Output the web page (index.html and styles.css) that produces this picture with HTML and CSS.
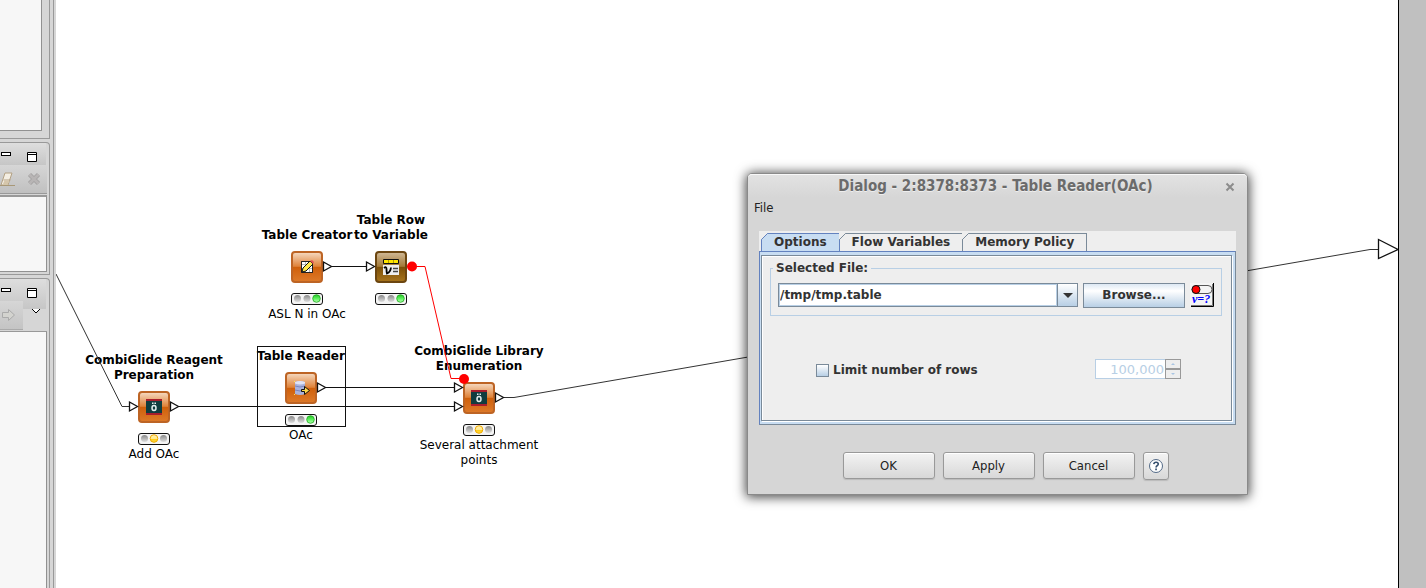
FILE: index.html
```html
<!DOCTYPE html>
<html lang="en">
<head>
<meta charset="utf-8">
<title>Workflow editor</title>
<link rel="stylesheet" href="styles.css">
</head>
<body>
<svg class="defs" width="0" height="0" aria-hidden="true">
  <defs>
    <linearGradient id="orange" x1="0" y1="0" x2="0" y2="1">
      <stop offset="0" stop-color="#f6dcc4"/><stop offset=".48" stop-color="#df8238"/>
      <stop offset=".5" stop-color="#cf5f0a"/><stop offset="1" stop-color="#dd7a2a"/>
    </linearGradient>
    <linearGradient id="brown" x1="0" y1="0" x2="0" y2="1">
      <stop offset="0" stop-color="#d2bb98"/><stop offset=".48" stop-color="#a37a38"/>
      <stop offset=".5" stop-color="#7b4f08"/><stop offset="1" stop-color="#a8741c"/>
    </linearGradient>
    <linearGradient id="grey" x1="0" y1="0" x2="0" y2="1">
      <stop offset="0" stop-color="#888"/><stop offset="1" stop-color="#ddd"/>
    </linearGradient>
    <linearGradient id="green" x1="0" y1="0" x2="0" y2="1">
      <stop offset="0" stop-color="#25c425"/><stop offset=".5" stop-color="#5df05d"/><stop offset="1" stop-color="#b5ffae"/>
    </linearGradient>
    <linearGradient id="amber" x1="0" y1="0" x2="0" y2="1">
      <stop offset="0" stop-color="#fff3b8"/><stop offset=".5" stop-color="#ffe98e"/><stop offset=".55" stop-color="#ffc813"/><stop offset="1" stop-color="#ffe14a"/>
    </linearGradient>
    <symbol id="tile-orange" viewBox="0 0 32 32">
      <rect x="1" y="1" width="30" height="30" rx="3" fill="url(#orange)" stroke="#bd6424" stroke-width="2"/>
    </symbol>
    <symbol id="tile-brown" viewBox="0 0 32 32">
      <rect x="1" y="1" width="30" height="30" rx="3" fill="url(#brown)" stroke="#6c4610" stroke-width="2"/>
    </symbol>
    <symbol id="lights-green" viewBox="0 0 32 12">
      <rect x=".5" y=".5" width="31" height="11" rx="2.5" fill="#f4f4f4" stroke="#111"/>
      <circle cx="6.500" cy="5.500" r="3.500" fill="url(#grey)"/><circle cx="16" cy="5.500" r="3.500" fill="url(#grey)"/>
      <circle cx="25.500" cy="5.500" r="3.800" fill="url(#green)" stroke="#1daa1d" stroke-width=".8"/>
    </symbol>
    <symbol id="lights-amber" viewBox="0 0 32 12">
      <rect x=".5" y=".5" width="31" height="11" rx="2.500" fill="#f4f4f4" stroke="#111"/>
      <circle cx="6.500" cy="5.500" r="3.500" fill="url(#grey)"/><circle cx="25.500" cy="5.500" r="3.500" fill="url(#grey)"/>
      <circle cx="16" cy="5.500" r="3.800" fill="url(#amber)" stroke="#f0a800" stroke-width="1"/>
    </symbol>
  </defs>
</svg>

<main class="workbench">
  <aside class="sidebar">
    <section class="view view-top"><div class="view-content"></div></section>
    <section class="view view-console">
      <div class="view-header">
        <button class="tool" aria-label="Minimize"><svg width="12" height="12"><rect x="1.500" y="1.500" width="9" height="3" fill="#fff" stroke="#000"/></svg></button>
        <button class="tool" aria-label="Maximize"><svg width="12" height="12"><path d="M1.500 1.500h9v9h-9zM1 3.500h10" fill="#fff" stroke="#000"/></svg></button>
      </div>
      <div class="view-tools">
        <button class="tool" aria-label="Clear"><svg width="16" height="16"><path d="M5 1h7l-4 12H1z" fill="#f4eee2" stroke="#b3a184"/><path d="M3.500 8h7" stroke="#b3a184"/><path d="M4.500 8.500h5l-2 4.500h-5z" fill="#d5c6ab"/><path d="M0 13.500h15" stroke="#a89877"/></svg></button>
        <button class="tool" aria-label="Remove"><svg width="14" height="14"><path d="M2.500 2.500l9 9M11.500 2.500l-9 9" stroke="#a5a3a3" stroke-width="4.500"/><path d="M2.500 2.500l9 9M11.500 2.500l-9 9" stroke="#b8b5b5" stroke-width="2.500"/></svg></button>
      </div>
      <div class="view-content"></div>
    </section>
    <section class="view view-help">
      <div class="view-header">
        <button class="tool" aria-label="Minimize"><svg width="12" height="12"><rect x="1.500" y="1.500" width="9" height="3" fill="#fff" stroke="#000"/></svg></button>
        <button class="tool" aria-label="Maximize"><svg width="12" height="12"><path d="M1.500 1.500h9v9h-9zM1 3.500h10" fill="#fff" stroke="#000"/></svg></button>
      </div>
      <div class="help-tools">
        <button class="tool nav" aria-label="Forward"><svg width="16" height="14"><path d="M2.500 4.500h6v-3l6 5.500-6 5.500v-3h-6z" fill="#d3d3cf" stroke="#aaa"/></svg></button>
        <button class="tool menu" aria-label="View menu"><svg width="10" height="6"><path d="M1 0l4 4 4-4" fill="#fff" stroke="#000"/></svg></button>
      </div>
      <div class="view-content"></div>
    </section>
  </aside>

  <section class="canvas">
    <div class="node creator">
      <div class="name">Table Creator</div>
      <svg class="tile" viewBox="0 0 32 32"><use href="#tile-orange"/>
        <path d="M10.500 10.500h11v11h-11z" fill="#fff" stroke="#333"/><path d="M10 13.500h12M10 17.500h12M14.500 10v12M18.500 10v12" stroke="#bbb"/><path d="M10.500 10.500h11v11h-11z" fill="none" stroke="#222"/>
        <path d="M11 21l1-4 7-7 3 3-7 7z" fill="#ffe94a" stroke="#111"/><path d="M19 10l2-1 2 2-1 2z" fill="#e35353"/></svg>
      <svg class="lights"><use href="#lights-green"/></svg>
      <div class="label">ASL N in OAc</div>
    </div>
    <div class="node variable">
      <div class="name">Table Row<br>to Variable</div>
      <svg class="tile" viewBox="0 0 32 32"><use href="#tile-brown"/>
        <path d="M8.500 8.500h15v4h-15z" fill="#ffe600" stroke="#111"/><path d="M13.500 9v3M18.500 9v3" stroke="#b59d00"/><path d="M8 14h16v10H8z" fill="#eee"/>
        <path d="M18 17.500h5M18 20.500h5" stroke="#444" stroke-width="1.500"/><path d="M9 17q2.500-2 2.500 1t.500 4.500q3.500-1.500 4-6" fill="none" stroke="#000" stroke-width="1.800"/></svg>
      <svg class="lights"><use href="#lights-green"/></svg>
    </div>
    <div class="node reagent">
      <div class="name">CombiGlide Reagent<br>Preparation</div>
      <svg class="tile" viewBox="0 0 32 32"><use href="#tile-orange"/><path d="M8 8h16v16H8z" fill="#a81d2b"/><path d="M8 10h16v12H8z" fill="#103c3e"/><ellipse cx="16" cy="17" rx="2" ry="2.500" fill="none" stroke="#e3eded" stroke-width="1.500"/><path d="M14 11.500h1.500v1.500H14zM16.500 11.500H18v1.500h-1.500z" fill="#e3eded"/></svg>
      <svg class="lights"><use href="#lights-amber"/></svg>
      <div class="label">Add OAc</div>
    </div>
    <div class="node reader">
      <div class="name">Table Reader</div>
      <svg class="tile" viewBox="0 0 32 32"><use href="#tile-orange"/><path d="M10 10q5-2 10 0v12q-5 2-10 0z" fill="#a9b2dc"/><path d="M10 10q5-2 10 0v1.500q-5 2-10 0z" fill="#dfe3f6"/><path d="M10 14q5 2 10 0M10 18q5 2 10 0" fill="none" stroke="#7c86bd"/><path d="M16.500 17.500h3v-3l5 4-5 4v-3h-3z" fill="#ffd84a" stroke="#111"/><path d="M9 9h1v1H9zM9 22h1v1H9z" fill="#ffe34d"/></svg>
      <svg class="lights"><use href="#lights-green"/></svg>
      <div class="label">OAc</div>
    </div>
    <div class="node library">
      <div class="name">CombiGlide Library<br>Enumeration</div>
      <svg class="tile" viewBox="0 0 32 32"><use href="#tile-orange"/><path d="M8 8h16v16H8z" fill="#a81d2b"/><path d="M8 10h16v12H8z" fill="#103c3e"/><ellipse cx="16" cy="17" rx="2" ry="2.500" fill="none" stroke="#e3eded" stroke-width="1.500"/><path d="M14 11.500h1.500v1.500H14zM16.500 11.500H18v1.500h-1.500z" fill="#e3eded"/></svg>
      <svg class="lights"><use href="#lights-amber"/></svg>
      <div class="label">Several attachment<br>points</div>
    </div>

    <svg class="edges" aria-hidden="true">
      <g transform="translate(-56 0)" fill="none" stroke="#111">
        <path d="M56 274L122 406.500h7" stroke="#333"/>
        <path d="M179 406.500h275M326 387.500h128M332 266.500h34"/>
        <path d="M504 397.500h10L1370 249.500h8" stroke="#333"/>
        <rect x="257.500" y="346.500" width="88" height="80"/>
        <g fill="#fff" stroke-width="1.300">
          <path d="M129.500 402l8 4.500-8 4.500zM170.500 402l8 4.500-8 4.500zM454.500 402l8 4.500-8 4.500zM454.500 383l8 4.500-8 4.500zM317.500 383l8 4.500-8 4.500zM495.500 393l8 4.500-8 4.500zM323.500 262l8 4.500-8 4.500zM366.500 262l8 4.500-8 4.500z"/>
          <path d="M1378.500 239.500l19.500 10-19.500 9z"/>
        </g>
        <path d="M412 266.500h13L451 378.500h10" stroke="#f00"/>
        <g fill="#f00" stroke="none"><circle cx="412" cy="266.500" r="5"/><circle cx="464" cy="379" r="5"/></g>
      </g>
    </svg>

    <div class="dialog" role="dialog" aria-labelledby="dialog-title">
      <header class="titlebar">
        <h1 id="dialog-title">Dialog - 2:8378:8373 - Table Reader(OAc)</h1>
        <button class="close" aria-label="Close"><svg width="10" height="10"><path d="M1.500 1.500l7 7M8.500 1.500l-7 7" stroke="#8c8c8c" stroke-width="2"/></svg></button>
      </header>
      <nav class="menubar"><button class="menu-item">File</button></nav>
      <div class="tabpane">
        <div class="tabs" role="tablist">
          <button class="tab active" role="tab" aria-selected="true">Options<svg class="notch" width="8" height="8"><path d="M0 0h7L0 7z" fill="#eee"/><path d="M.5 8V6.500L6.500.500H8" fill="none" stroke="#6382bf"/></svg></button>
          <button class="tab" role="tab" aria-selected="false">Flow Variables<svg class="notch" width="8" height="8"><path d="M0 0h7L0 7z" fill="#eee"/><path d="M0 7L6.500.500H8" fill="none" stroke="#7a8a99"/></svg></button>
          <button class="tab" role="tab" aria-selected="false">Memory Policy<svg class="notch" width="8" height="8"><path d="M0 0h7L0 7z" fill="#eee"/><path d="M0 7L6.500.500H8" fill="none" stroke="#7a8a99"/></svg></button>
        </div>
        <div class="tab-frame">
          <form class="tab-body">
            <fieldset class="file-group">
              <legend>Selected File:</legend>
              <div class="file-row">
                <div class="combo">
                  <input type="text" value="/tmp/tmp.table" aria-label="Selected file">
                  <button type="button" aria-label="Show recent files"><svg width="10" height="5"><path d="M0 0h10L5 5z" fill="#333"/></svg></button>
                </div>
                <button type="button" class="metal">Browse...</button>
                <button type="button" class="variable-button" aria-label="Flow variable"><svg width="24" height="24"><path d="M0 0h23v23H0z" fill="#f4f4f4"/><path d="M23.500 0v23.500H1" fill="none" stroke="#000"/><path d="M22.500 1v21.500H1" fill="none" stroke="#777"/><rect x="2" y="2.500" width="20" height="8" rx="4" fill="#f4f4f4" stroke="#555"/><circle cx="6" cy="6.500" r="4" fill="#f00" stroke="#111"/><text x="2" y="20" class="variable-mark">v=?</text></svg></button>
              </div>
            </fieldset>
            <div class="limit-row">
              <label class="limit"><input type="checkbox">Limit number of rows</label>
              <div class="spinner">
                <input type="text" value="100,000" aria-label="Row limit" disabled>
                <div class="steps">
                  <button type="button" aria-label="Increase" disabled><svg width="4" height="2"><path d="M0 2l2-2 2 2z" fill="#a9c5e3"/></svg></button>
                  <button type="button" aria-label="Decrease" disabled><svg width="4" height="2"><path d="M0 0h4L2 2z" fill="#a9c5e3"/></svg></button>
                </div>
              </div>
            </div>
          </form>
        </div>
      </div>
      <footer class="actions">
        <button class="action">OK</button>
        <button class="action">Apply</button>
        <button class="action">Cancel</button>
        <button class="help" aria-label="Help"><svg width="16" height="16"><circle cx="8" cy="8" r="6.500" fill="#fff" stroke="#536a87"/><path d="M5.800 6.200q.2-2 2.300-2t2.200 1.900q0 1-1.200 1.700-1 .6-1 1.700" fill="none" stroke="#36506f" stroke-width="1.600"/><path d="M7.200 10.500h1.700v1.700H7.200z" fill="#36506f"/></svg></button>
      </footer>
    </div>
  </section>
  <div class="gutter"></div>
</main>
</body>
</html>
```
FILE: styles.css
```css
* { box-sizing: border-box; }
body { margin: 0; font-family: "DejaVu Sans Condensed", "DejaVu Sans", sans-serif; font-size: 13px; line-height: 15px; color: #000; }
button, input { font: inherit; color: inherit; margin: 0; padding: 0; border: 0; border-radius: 0; background: none; }
svg { display: block; }
.defs { position: absolute; }
.workbench { display: flex; min-height: 100vh; overflow: hidden; background: #fff; }

.sidebar { flex: none; width: 56px; display: flex; flex-direction: column; gap: 3px; padding-right: 6px; background: linear-gradient(to right, #d6d6d6 53px, #999 53px, #999 54px, #d6d6d6 54px); }
.view { border-right: 1px solid #999; border-bottom: 1px solid #999; display: flex; flex-direction: column; }
.view-content { background: #f7f7f7; border-right: 1px solid #919191; border-bottom: 1px solid #919191; margin-right: 2px; flex: 1; }
.view-top { height: 139px; padding-bottom: 7px; }
.view-top .view-content { margin-right: 7px; }
.view-console { height: 133px; padding-bottom: 2px; border-top: 1px solid #999; border-top-right-radius: 4px; }
.view-help { flex: 1; border-top: 1px solid #999; border-bottom: 0; border-top-right-radius: 4px; }
.view-header { display: flex; align-items: flex-start; gap: 14px; height: 22px; margin-right: 3px; padding-top: 8px; background: linear-gradient(#dedede, #c6c6c6); }
.view-tools { display: flex; align-items: flex-start; gap: 11px; height: 29px; margin-right: 2px; padding-top: 7px; background: linear-gradient(#d6d6d6, #c0c0c0); border-bottom: 1px solid #999; }
.view-console .view-content { border-top: 2px solid #999; margin-top: 1px; }
.view-help .view-header { height: 30px; }
.view-help .view-content { border-bottom: 0; }
.help-tools { display: flex; justify-content: space-between; height: 23px; margin-right: 2px; padding-right: 6px; border-bottom: 1px solid #999; }
.nav { width: 23px; height: 29px; margin-top: -8px; background: linear-gradient(#d6d6d6, #c4c4c4); border-bottom: 1px solid #aaa; }
.menu { align-self: flex-start; }
.tool { flex: none; }

.canvas { position: relative; flex: 1; min-width: 0; background: #fff; }
.gutter { flex: none; width: 28px; background: #c0c0c0; border-left: 1px solid #000; }
.edges { position: absolute; inset: 0; width: 100%; height: 100%; }
.node { position: absolute; width: 160px; display: flex; flex-direction: column; align-items: center; font-family: "DejaVu Sans", sans-serif; font-size: 12px; text-align: center; white-space: nowrap; }
.name { font-weight: bold; margin-bottom: 8px; }
.tile { width: 32px; height: 32px; }
.lights { width: 32px; height: 12px; margin: 10px 0 2px; }
.creator { left: 171px; top: 228px; }
.variable { left: 255px; top: 213px; }
.reagent { left: 18px; top: 353px; }
.reader { left: 165px; top: 349px; }
.library { left: 343px; top: 344px; }

.dialog { position: absolute; left: 691px; top: 173px; width: 501px; background: #d6d6d6; border: 1px solid #8a8a8a; border-radius: 5px 5px 0 0; box-shadow: 0 1px 12px 1px rgba(0,0,0,.75), inset 0 1px #f8f8f8; }
.titlebar { display: flex; align-items: center; height: 24px; padding: 0 12px; border-radius: 4px 4px 0 0; background: linear-gradient(#e2e2e2, #d6d6d6); border-top: 1px solid #f8f8f8; }
.titlebar h1 { flex: 1; margin: 0; padding-left: 6px; font: bold 15px/15px "DejaVu Sans Condensed", "DejaVu Sans", sans-serif; text-align: center; color: #6b6b6b; text-shadow: 0 1px #eee; }
.menubar { height: 33px; padding: 2px 6px; }
.menu-item { color: #222; }
.tabpane { margin: 0 11px; background: #eee; font: bold 12px/15px "DejaVu Sans", sans-serif; color: #333; }
.tabs { display: flex; padding: 2px 2px 0; height: 20px; }
.tab { position: relative; height: 18px; padding: 0 12px; border: 1px solid #7a8a99; border-width: 1px 1px 0 0; }
.tab.active { background: #c8ddf2; border: 1px solid #6382bf; border-bottom: 0; }
.notch { position: absolute; left: -1px; top: -1px; }
.tab-frame { border: 1px solid #6382bf; border-right-color: #7a8a99; border-bottom-color: #7a8a99; background: #c8ddf2; padding: 3px 3px 3px 1px; }
.tab-body { height: 166px; border: 1px solid #7a8a99; background: #eee; padding: 5px 9px 5px 8px; box-shadow: inset 1px 1px #fff, 1px 1px #fff; }
.file-group { margin: 0; padding: 7px; height: 55px; border: 1px solid #b8cfe5; min-width: 0; }
.file-group legend { padding: 0 3px; margin-left: -5px; height: 15px; }
.file-row { display: flex; gap: 5px; }
.combo { display: flex; flex: 1; height: 24px; border: 1px solid #7a8a99; background: #fff; }
.combo input { flex: 1; min-width: 0; padding-left: 1px; box-shadow: inset 0 0 0 1px #b8cfe5; }
.combo button { width: 20px; display: flex; align-items: center; justify-content: center; border-left: 1px solid #7a8a99; background: linear-gradient(#fff, #b8cfe5); }
.metal { width: 102px; height: 25px; border: 1px solid #7a8a99; background: linear-gradient(#dde8f3, #fff 30%, #b8cfe5); }
.variable-button { width: 24px; height: 24px; }
.variable-mark { font: italic bold 12px "Liberation Serif", serif; fill: #00f; }
.limit-row { display: flex; justify-content: space-between; align-items: center; margin-top: 43px; padding: 0 41px 0 46px; }
.limit { display: flex; align-items: center; gap: 4px; padding-top: 2px; }
.limit input { appearance: none; width: 13px; height: 13px; border: 1px solid #7a8a99; background: linear-gradient(#fff, #b8cfe5); }
.spinner { display: flex; width: 86px; height: 20px; font-size: 13px; }
.spinner input { flex: 1; min-width: 0; text-align: right; padding-right: 1px; font-weight: normal; color: #b8cfe5; border: 1px solid #b8cfe5; border-right: 0; background: #fff; }
.steps { width: 16px; display: flex; flex-direction: column; }
.steps button { flex: 1; display: flex; align-items: center; justify-content: center; border: 1px solid #999; background: #eee; }
.actions { display: flex; justify-content: center; align-items: flex-start; gap: 8px; padding: 27px 0 14px; padding-left: 16px; }
.action, .help { height: 27px; border: 1px solid #999; border-radius: 3px; background: linear-gradient(#f3f3f3, #d8d8d8); box-shadow: inset 0 1px #fff, 0 1px 1px #bbb; color: #222; }
.action { width: 92px; }
.help { width: 26px; height: 28px; display: flex; align-items: center; justify-content: center; }
```
